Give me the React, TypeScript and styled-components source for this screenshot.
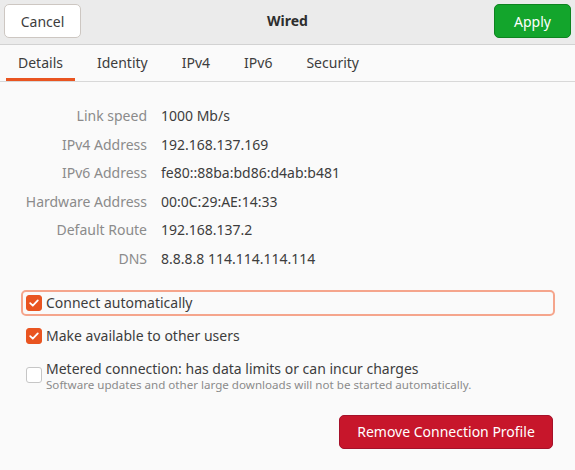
import React from "react";
import styled, { createGlobalStyle } from "styled-components";

const Global = createGlobalStyle`
  html, body { margin: 0; padding: 0; background: #fafafa; }
  body { font-family: "Noto Sans", "DejaVu Sans", sans-serif; color: #3d3d3d; }
  * { box-sizing: border-box; }
`;

const Window = styled.div`
  width: 575px;
  height: 470px;
  background: #fafafa;
  display: flex;
  flex-direction: column;
  overflow: hidden;
`;

const HeaderBar = styled.div`
  flex: none;
  height: 45px;
  background: #ebebeb;
  border-bottom: 1px solid #d2d2d2;
  display: grid;
  grid-template-columns: 1fr auto 1fr;
  align-items: start;
  padding: 4px 4px 0 4px;
`;

const Title = styled.div`
  font-weight: bold;
  font-size: 14px;
  text-align: center;
  color: #2e2e2e;
  line-height: 33px;
`;

const HeaderButton = styled.button<{ $variant?: "default" | "suggested" }>`
  justify-self: ${(p) => (p.$variant === "suggested" ? "end" : "start")};
  width: 77px;
  height: 34px;
  border-radius: 5px;
  font-family: inherit;
  font-size: 14px;
  border: 1px solid ${(p) => (p.$variant === "suggested" ? "#0e8420" : "#cdc7c2")};
  background: ${(p) => (p.$variant === "suggested" ? "#13a52c" : "#ffffff")};
  color: ${(p) => (p.$variant === "suggested" ? "#ffffff" : "#3d3d3d")};
`;

const TabBar = styled.div`
  flex: none;
  height: 37px;
  display: flex;
  padding-left: 6px;
  border-bottom: 1px solid #d8d8d8;
  background: #fafafa;
`;

const Tab = styled.div<{ $active?: boolean }>`
  padding: 2px 12px 0 12px;
  margin-right: 10px;
  font-size: 14px;
  line-height: 31px;
  color: #3d3d3d;
  border-bottom: 3px solid ${(p) => (p.$active ? "#e95420" : "transparent")};
`;

const Content = styled.div`
  flex: 1;
  display: flex;
  flex-direction: column;
  padding: 20px 21px 0 21px;
`;

const InfoGrid = styled.div`
  display: grid;
  grid-template-columns: 126px auto;
  column-gap: 14px;
`;

const Label = styled.div`
  text-align: right;
  color: #8b8b8b;
  font-size: 14px;
  line-height: 28.6px;
`;

const Value = styled.div`
  color: #3d3d3d;
  font-size: 14px;
  line-height: 28.6px;
`;

const Options = styled.div`
  display: flex;
  flex-direction: column;
  gap: 7px;
  margin-top: 16px;
`;

const CheckRow = styled.div<{ $focused?: boolean }>`
  display: flex;
  align-items: center;
  gap: 4px;
  padding: 2px 3px;
  border: 2px solid ${(p) => (p.$focused ? "#f5a58c" : "transparent")};
  border-radius: 5px;
  width: 534px;
`;

const Box = styled.span<{ $checked?: boolean }>`
  flex: none;
  width: 16px;
  height: 16px;
  border-radius: 3px;
  border: 1px solid ${(p) => (p.$checked ? "#e95420" : "#c6c6c6")};
  background: ${(p) => (p.$checked ? "#e95420" : "#ffffff")};
  display: flex;
  align-items: center;
  justify-content: center;
`;

const CheckText = styled.div`
  display: flex;
  flex-direction: column;
`;

const CheckLabel = styled.span`
  font-size: 14px;
  line-height: 18px;
  color: #3d3d3d;
`;

const SubLabel = styled.span`
  font-size: 11.6px;
  line-height: 13px;
  color: #8b8b8b;
`;

const Footer = styled.div`
  display: flex;
  justify-content: flex-end;
  padding-right: 1px;
  margin-top: 20px;
`;

const DestructiveButton = styled.button`
  width: 214px;
  height: 34px;
  border-radius: 5px;
  border: 1px solid #a5112a;
  background: #c7162b;
  color: #ffffff;
  font-family: inherit;
  font-size: 14px;
`;

const Check = () => (
  <svg width="12" height="12" viewBox="0 0 12 12">
    <path d="M2.2 6.2 L4.8 8.7 L9.8 3.4" fill="none" stroke="#fff" strokeWidth="1.8" strokeLinecap="round" strokeLinejoin="round" />
  </svg>
);

const rows: [string, string][] = [
  ["Link speed", "1000 Mb/s"],
  ["IPv4 Address", "192.168.137.169"],
  ["IPv6 Address", "fe80::88ba:bd86:d4ab:b481"],
  ["Hardware Address", "00:0C:29:AE:14:33"],
  ["Default Route", "192.168.137.2"],
  ["DNS", "8.8.8.8 114.114.114.114"],
];

export default function App() {
  return (
    <Window>
      <Global />
      <HeaderBar>
        <HeaderButton>Cancel</HeaderButton>
        <Title>Wired</Title>
        <HeaderButton $variant="suggested">Apply</HeaderButton>
      </HeaderBar>
      <TabBar>
        <Tab $active>Details</Tab>
        <Tab>Identity</Tab>
        <Tab>IPv4</Tab>
        <Tab>IPv6</Tab>
        <Tab>Security</Tab>
      </TabBar>
      <Content>
        <InfoGrid>
          {rows.map(([l, v]) => (
            <React.Fragment key={l}>
              <Label>{l}</Label>
              <Value>{v}</Value>
            </React.Fragment>
          ))}
        </InfoGrid>
        <Options>
          <CheckRow $focused>
            <Box $checked><Check /></Box>
            <CheckText><CheckLabel>Connect automatically</CheckLabel></CheckText>
          </CheckRow>
          <CheckRow>
            <Box $checked><Check /></Box>
            <CheckText><CheckLabel>Make available to other users</CheckLabel></CheckText>
          </CheckRow>
          <CheckRow>
            <Box />
            <CheckText>
              <CheckLabel>Metered connection: has data limits or can incur charges</CheckLabel>
              <SubLabel>Software updates and other large downloads will not be started automatically.</SubLabel>
            </CheckText>
          </CheckRow>
        </Options>
        <Footer>
          <DestructiveButton>Remove Connection Profile</DestructiveButton>
        </Footer>
      </Content>
    </Window>
  );
}
